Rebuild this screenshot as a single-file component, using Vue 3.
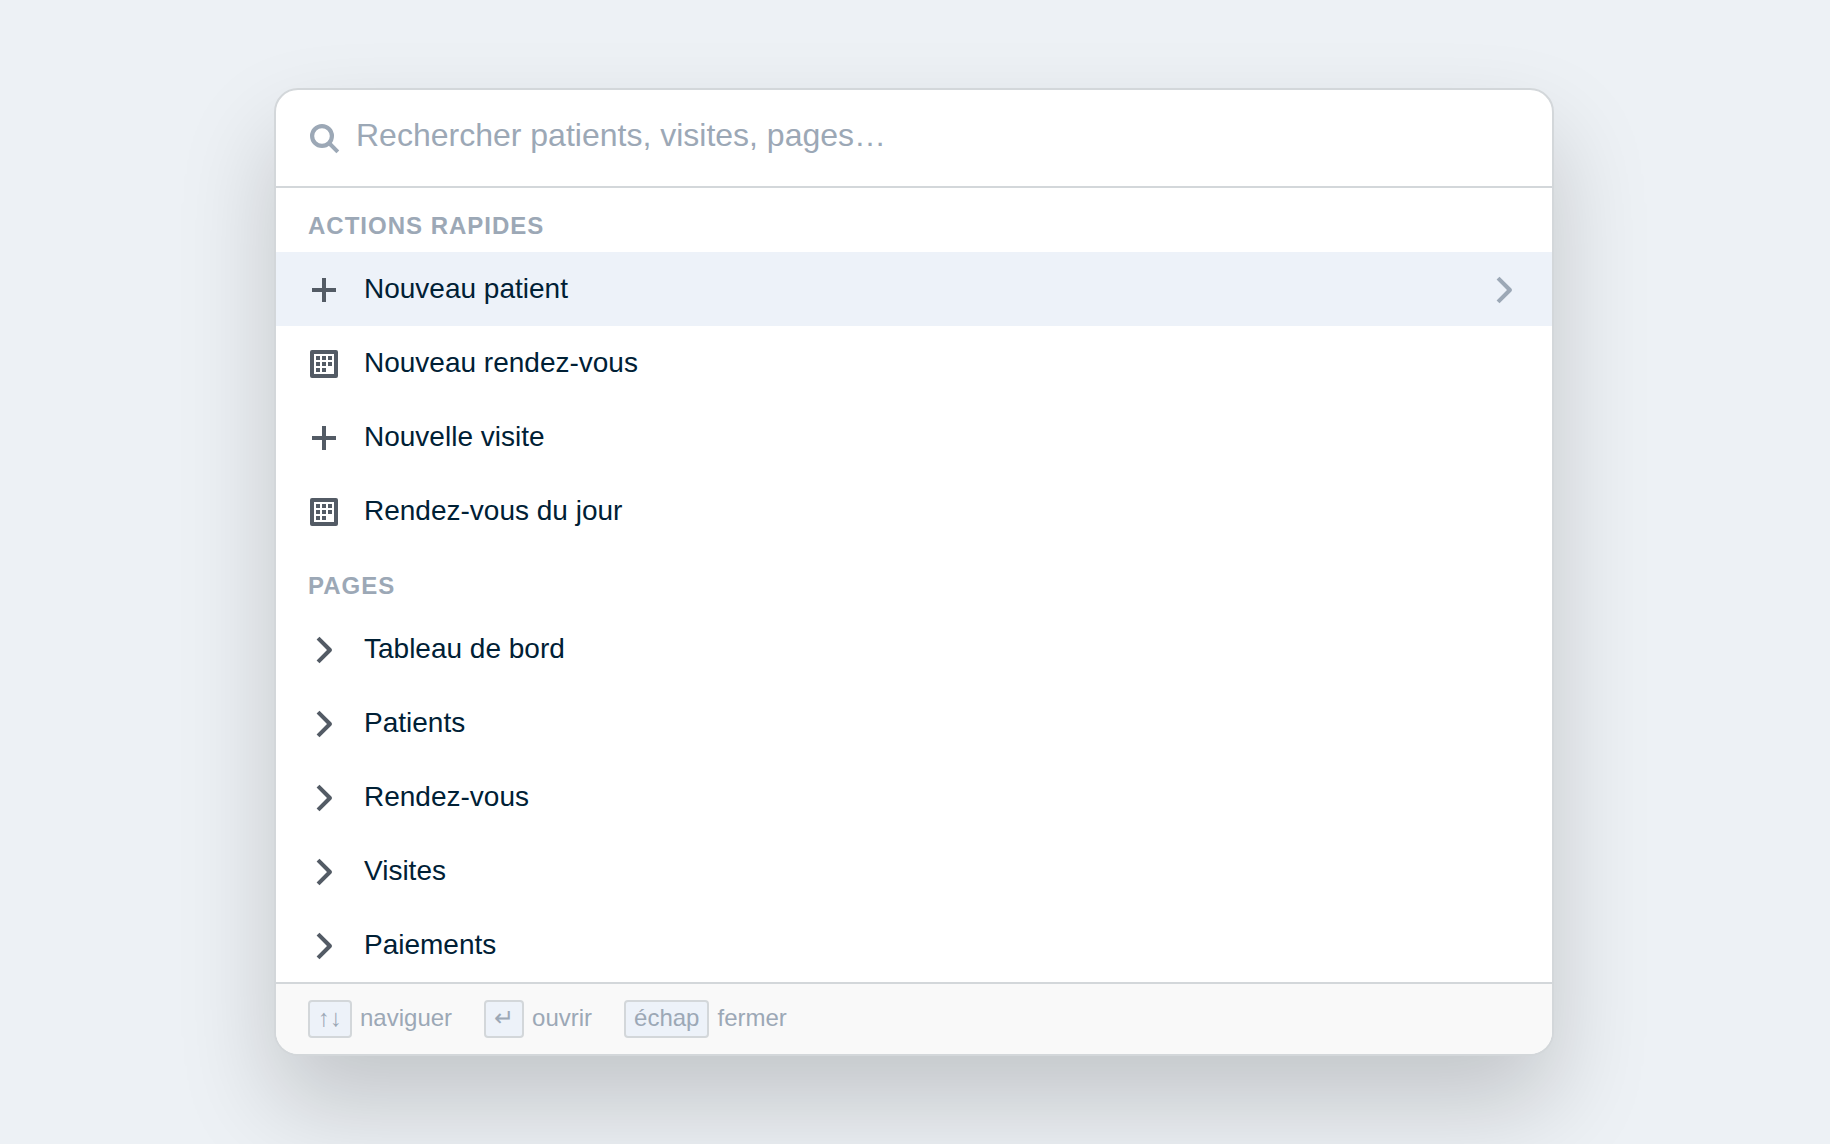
<script setup>
import { ref } from 'vue'

const query = ref('')
const active = ref('Nouveau patient')

const groups = [
  {
    id: 'actions',
    title: 'ACTIONS RAPIDES',
    items: [
      { label: 'Nouveau patient', icon: 'plus' },
      { label: 'Nouveau rendez-vous', icon: 'calendar' },
      { label: 'Nouvelle visite', icon: 'plus' },
      { label: 'Rendez-vous du jour', icon: 'calendar' },
    ],
  },
  {
    id: 'pages',
    title: 'PAGES',
    items: [
      { label: 'Tableau de bord', icon: 'chevron' },
      { label: 'Patients', icon: 'chevron' },
      { label: 'Rendez-vous', icon: 'chevron' },
      { label: 'Visites', icon: 'chevron' },
      { label: 'Paiements', icon: 'chevron' },
    ],
  },
]

const hints = [
  { key: '↑↓', text: 'naviguer' },
  { key: '↵', text: 'ouvrir' },
  { key: 'échap', text: 'fermer' },
]

const shapes = {
  plus: 'M14 4h4v10h10v4H18v10h-4V18H4v-4h10z',
  calendar:
    'M4 2h24a2 2 0 0 1 2 2v24a2 2 0 0 1-2 2H4a2 2 0 0 1-2-2V4a2 2 0 0 1 2-2zM6 6v20h20V6zM8 8h4v4H8zM14 8h4v4h-4zM20 8h4v4h-4zM8 14h4v4H8zM14 14h4v4h-4zM20 14h4v4h-4zM8 20h4v4H8zM14 20h4v4h-4z',
  chevron:
    'M11.5 2.8 23.4 14.6a2 2 0 0 1 0 2.8L11.5 29.2 8.6 26.4 19 16 8.6 5.6z',
}
</script>

<template>
  <main class="page">
    <section class="palette" aria-label="Palette de commandes">
      <label class="search">
        <svg class="glyph" viewBox="0 0 32 32" aria-hidden="true">
          <circle cx="14" cy="14" r="9.9" fill="none" stroke="currentColor" stroke-width="4.2" />
          <path d="M20.5 20.5 29.8 29.8" stroke="currentColor" stroke-width="4" />
        </svg>
        <input
          v-model="query"
          class="field"
          type="text"
          aria-label="Rechercher"
          placeholder="Rechercher patients, visites, pages…"
        />
      </label>

      <div class="results">
        <section v-for="group in groups" :key="group.id" :aria-labelledby="group.id">
          <h2 :id="group.id" class="title">{{ group.title }}</h2>
          <button
            v-for="item in group.items"
            :key="item.label"
            type="button"
            class="row"
            :class="{ active: item.label === active }"
            @mouseenter="active = item.label"
          >
            <span class="icon">
              <svg class="glyph" viewBox="0 0 32 32" aria-hidden="true">
                <path :d="shapes[item.icon]" fill="currentColor" fill-rule="evenodd" />
              </svg>
            </span>
            <span class="label">{{ item.label }}</span>
            <span v-if="item.label === active" class="icon go">
              <svg class="glyph" viewBox="0 0 32 32" aria-hidden="true">
                <path :d="shapes.chevron" fill="currentColor" />
              </svg>
            </span>
          </button>
        </section>
      </div>

      <footer class="hints">
        <span v-for="hint in hints" :key="hint.text" class="hint">
          <kbd class="key">{{ hint.key }}</kbd>
          <span>{{ hint.text }}</span>
        </span>
      </footer>
    </section>
  </main>
</template>

<style>
body {
  margin: 0;
  background: #edf1f5;
}
</style>

<style scoped>
.page {
  box-sizing: border-box;
  min-height: 100vh;
  padding: 88px 34px 88px 32px;
  overflow: hidden;
  background: #edf1f5;
  color: #002035;
  font-family: "Liberation Sans", Arial, sans-serif;
}

.palette {
  box-sizing: border-box;
  max-width: 1280px;
  margin: 0 auto;
  overflow: hidden;
  border: 2px solid #d3d7da;
  border-radius: 24px;
  background: #fff;
  box-shadow: 0 48px 96px rgba(0, 0, 0, 0.18);
}

.search {
  display: flex;
  align-items: center;
  gap: 16px;
  padding: 24px 32px;
  border-bottom: 2px solid #d3d7da;
  color: #9ca8b6;
}

.glyph {
  display: block;
  flex: none;
  width: 32px;
  height: 32px;
}

.field {
  box-sizing: border-box;
  flex: 1;
  min-width: 0;
  height: 48px;
  padding: 0 0 6px;
  border: 0;
  outline: 0;
  background: transparent;
  color: #002035;
  font: inherit;
  font-size: 32px;
}

.field::placeholder {
  color: #9ca8b6;
  opacity: 1;
}

.title {
  margin: 0;
  padding: 24px 32px 12px;
  color: #9ca8b6;
  font-size: 24px;
  line-height: 28px;
  letter-spacing: 1px;
}

.row {
  display: flex;
  align-items: center;
  gap: 24px;
  width: 100%;
  padding: 20px 32px;
  border: 0;
  background: transparent;
  color: inherit;
  font: inherit;
  font-size: 28px;
  line-height: 32px;
  text-align: left;
}

.row.active {
  background: #edf2f9;
}

.icon {
  flex: none;
  padding-top: 2px;
  color: #535b65;
}

.label {
  flex: 1;
}

.go {
  color: #9ca8b6;
}

.hints {
  display: flex;
  flex-wrap: wrap;
  gap: 32px;
  padding: 16px 32px;
  border-top: 2px solid #d3d7da;
  background: #f9f9f9;
  color: #9ca8b6;
  font-size: 24px;
  line-height: 28px;
}

.hint {
  display: flex;
  align-items: baseline;
  gap: 8px;
}

.key {
  padding: 2px 8px 4px;
  border: 2px solid #d3d7da;
  border-radius: 4px;
  background: #edf2f9;
  font: inherit;
}
</style>
